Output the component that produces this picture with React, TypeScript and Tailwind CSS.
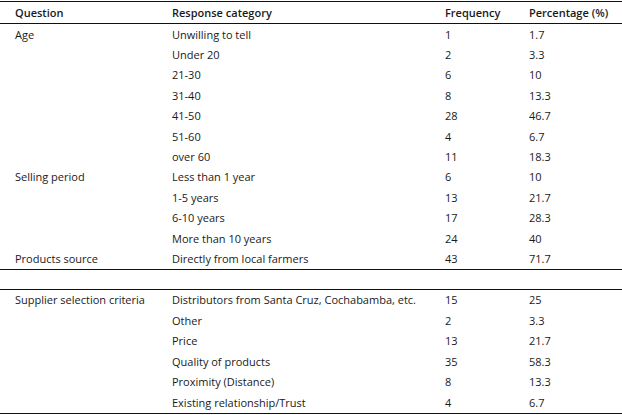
const topRows: [string, string, string, string][] = [
  ["Age", "Unwilling to tell", "1", "1.7"],
  ["", "Under 20", "2", "3.3"],
  ["", "21-30", "6", "10"],
  ["", "31-40", "8", "13.3"],
  ["", "41-50", "28", "46.7"],
  ["", "51-60", "4", "6.7"],
  ["", "over 60", "11", "18.3"],
  ["Selling period", "Less than 1 year", "6", "10"],
  ["", "1-5 years", "13", "21.7"],
  ["", "6-10 years", "17", "28.3"],
  ["", "More than 10 years", "24", "40"],
  ["Products source", "Directly from local farmers", "43", "71.7"],
];

const bottomRows: [string, string, string, string][] = [
  ["Supplier selection criteria", "Distributors from Santa Cruz, Cochabamba, etc.", "15", "25"],
  ["", "Other", "2", "3.3"],
  ["", "Price", "13", "21.7"],
  ["", "Quality of products", "35", "58.3"],
  ["", "Proximity (Distance)", "8", "13.3"],
  ["", "Existing relationship/Trust", "4", "6.7"],
];

const cols = "grid grid-cols-[172px_273px_84px_1fr] items-center";

function Row({ cells, h }: { cells: string[]; h: string }) {
  return (
    <div className={`${cols} ${h}`}>
      <div className="pl-[15px]">{cells[0]}</div>
      <div>{cells[1]}</div>
      <div>{cells[2]}</div>
      <div>{cells[3]}</div>
    </div>
  );
}

export default function App() {
  return (
    <div
      className="w-[622px] h-[415px] bg-white text-[#1a1a1a] text-[11px] leading-none pt-px"
      style={{ fontFamily: '"Open Sans", sans-serif' }}
    >
      <div className="border-t border-[#111]">
        <div className={`${cols} h-[22px] border-b border-[#111] font-semibold`}>
          <div className="pl-[15px]">Question</div>
          <div>Response category</div>
          <div>Frequency</div>
          <div>Percentage (%)</div>
        </div>
        {topRows.map((r, i) => (
          <Row key={i} cells={r} h="h-[20.4px]" />
        ))}
        <div className="h-[21px] border-y border-[#111]" />
        <div className="border-b border-[#111]">
          {bottomRows.map((r, i) => (
            <Row key={i} cells={r} h="h-[20.5px]" />
          ))}
        </div>
      </div>
    </div>
  );
}
